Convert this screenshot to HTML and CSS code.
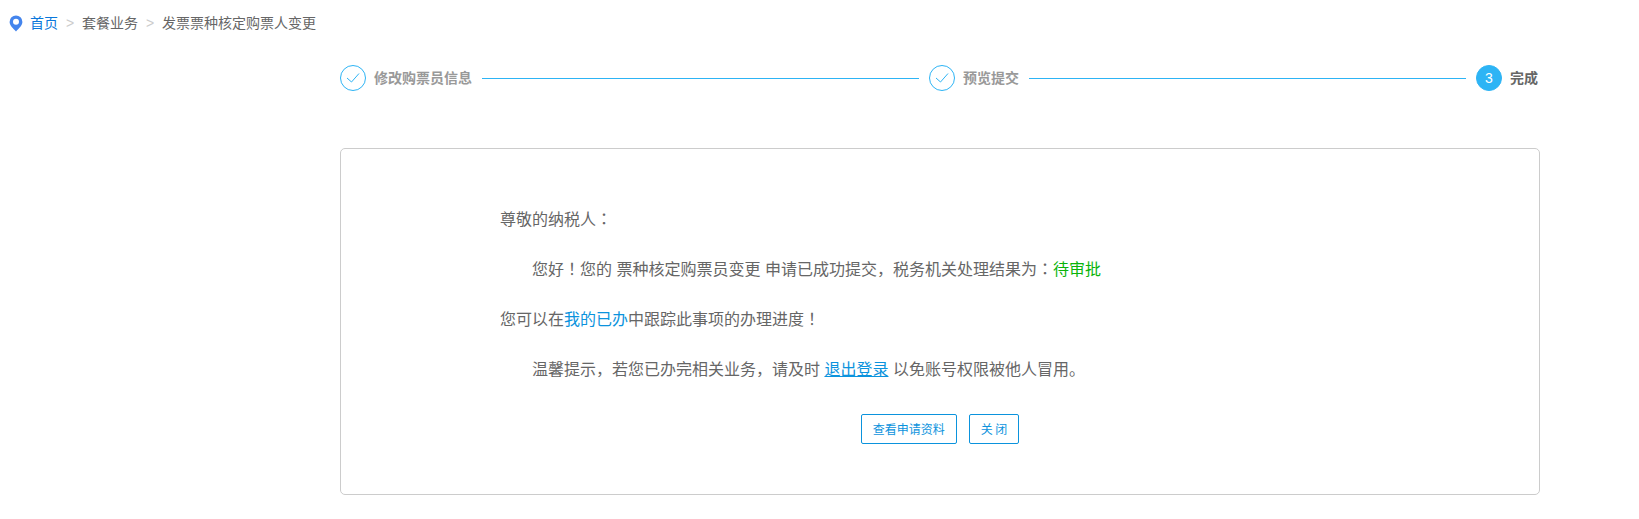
FILE: index.html
```html
<!DOCTYPE html>
<html lang="zh-CN">
<head>
<meta charset="utf-8">
<meta name="viewport" content="width=device-width, initial-scale=1">
<title>发票票种核定购票人变更</title>
<link rel="stylesheet" href="styles.css">
</head>
<body>
<nav class="breadcrumb" aria-label="当前位置">
  <svg class="pin" viewBox="0 0 14 17" aria-hidden="true"><path fill="#4485ed" fill-rule="evenodd" d="M7 0.5a6.4 6.4 0 0 1 6.4 6.4c0 3.6-3.6 6.2-6.4 9.6C4.200 13.100 .6 10.500 .6 6.900A6.400 6.400 0 0 1 7 .5zM7 3.800a3 3 0 1 0 0 6 3 3 0 0 0 0-6z"/></svg>
  <a class="home" href="#">首页</a>
  <span class="separator">&gt;</span>
  <span>套餐业务</span>
  <span class="separator">&gt;</span>
  <span>发票票种核定购票人变更</span>
</nav>
<main class="content">
  <ol class="steps">
    <li class="step">
      <span class="badge"><svg class="check" viewBox="0 0 14 12" aria-hidden="true"><path d="M1 6l4.500 4L13 1.500"/></svg></span>
      <span class="label">修改购票员信息</span>
    </li>
    <li class="step">
      <span class="badge"><svg class="check" viewBox="0 0 14 12" aria-hidden="true"><path d="M1 6l4.500 4L13 1.500"/></svg></span>
      <span class="label">预览提交</span>
    </li>
    <li class="step current" aria-current="step">
      <span class="badge">3</span>
      <span class="label">完成</span>
    </li>
  </ol>
  <section class="card">
    <div class="message">
      <p>尊敬的纳税人<span class="mark" lang="ja">：</span></p>
      <p class="indent">您好<span class="mark" lang="ja">！</span>您的 票种核定购票员变更 申请已成功提交，税务机关处理结果为<span class="mark" lang="ja">：</span><span class="status">待审批</span></p>
      <p>您可以在<a href="#">我的已办</a>中跟踪此事项的办理进度<span class="mark" lang="ja">！</span></p>
      <p class="indent">温馨提示，若您已办完相关业务，请及时 <a class="logout" href="#">退出登录</a> 以免账号权限被他人冒用。</p>
    </div>
    <div class="actions">
      <button type="button">查看申请资料</button>
      <button type="button">关 闭</button>
    </div>
  </section>
</main>
</body>
</html>
```

FILE: styles.css
```css
* { box-sizing: border-box; }
body {
  margin: 0;
  background: #fff;
  color: #666;
  font: 14px/20px "Liberation Sans", "Noto Sans CJK SC", sans-serif;
}
a { color: #0b93dd; text-decoration: none; }
.breadcrumb {
  display: flex;
  align-items: center;
  padding: 13px 9px 12px;
}
.pin { width: 14px; height: 17px; margin-right: 7px; }
.home { color: #0a78dc; }
.separator {
  width: 24px;
  text-align: center;
  color: #ccc;
}
.content { margin: 20px 99px 24px 340px; }
.steps {
  display: flex;
  margin: 0;
  padding: 0 2px 0 0;
  list-style: none;
}
.step {
  display: flex;
  flex: 1 1 auto;
  align-items: center;
  gap: 8px;
  color: #999;
  font-weight: 700;
  white-space: nowrap;
}
.step:not(.current)::after {
  content: "";
  flex: 1;
  height: 1px;
  margin: 0 10px 0 2px;
  background: #2db4f5;
}
.step.current { flex: none; color: #666; }
.badge {
  display: flex;
  align-items: center;
  justify-content: center;
  width: 26px;
  height: 26px;
  border: 1px solid #2db4f5;
  border-radius: 50%;
  font: 14px/24px "Liberation Sans", sans-serif;
}
.current .badge { background: #2db4f5; color: #fff; }
.check {
  width: 14px;
  height: 12px;
  fill: none;
  stroke: #2db4f5;
  stroke-width: 1;
}
.card {
  margin-top: 57px;
  padding: 46px 20px 50px;
  border: 1px solid #ccc;
  border-radius: 5px;
}
.message { padding-left: 139px; font-size: 16px; line-height: 50px; }
.message p { margin: 0; }
.message .indent { text-indent: 2em; }
.mark { font-family: "Noto Sans CJK JP", sans-serif; line-height: 1; }
.status { color: #0ab40a; }
.message .logout {
  text-decoration: underline 1px;
  text-underline-offset: 1px;
}
.actions {
  display: flex;
  justify-content: center;
  gap: 12px;
  margin-top: 19px;
}
.actions button {
  height: 30px;
  padding: 0 11px;
  border: 1px solid #0b93dd;
  border-radius: 2px;
  background: #fff;
  color: #0b93dd;
  font: 12px/18px "Noto Sans CJK SC", sans-serif;
  cursor: pointer;
}
```
